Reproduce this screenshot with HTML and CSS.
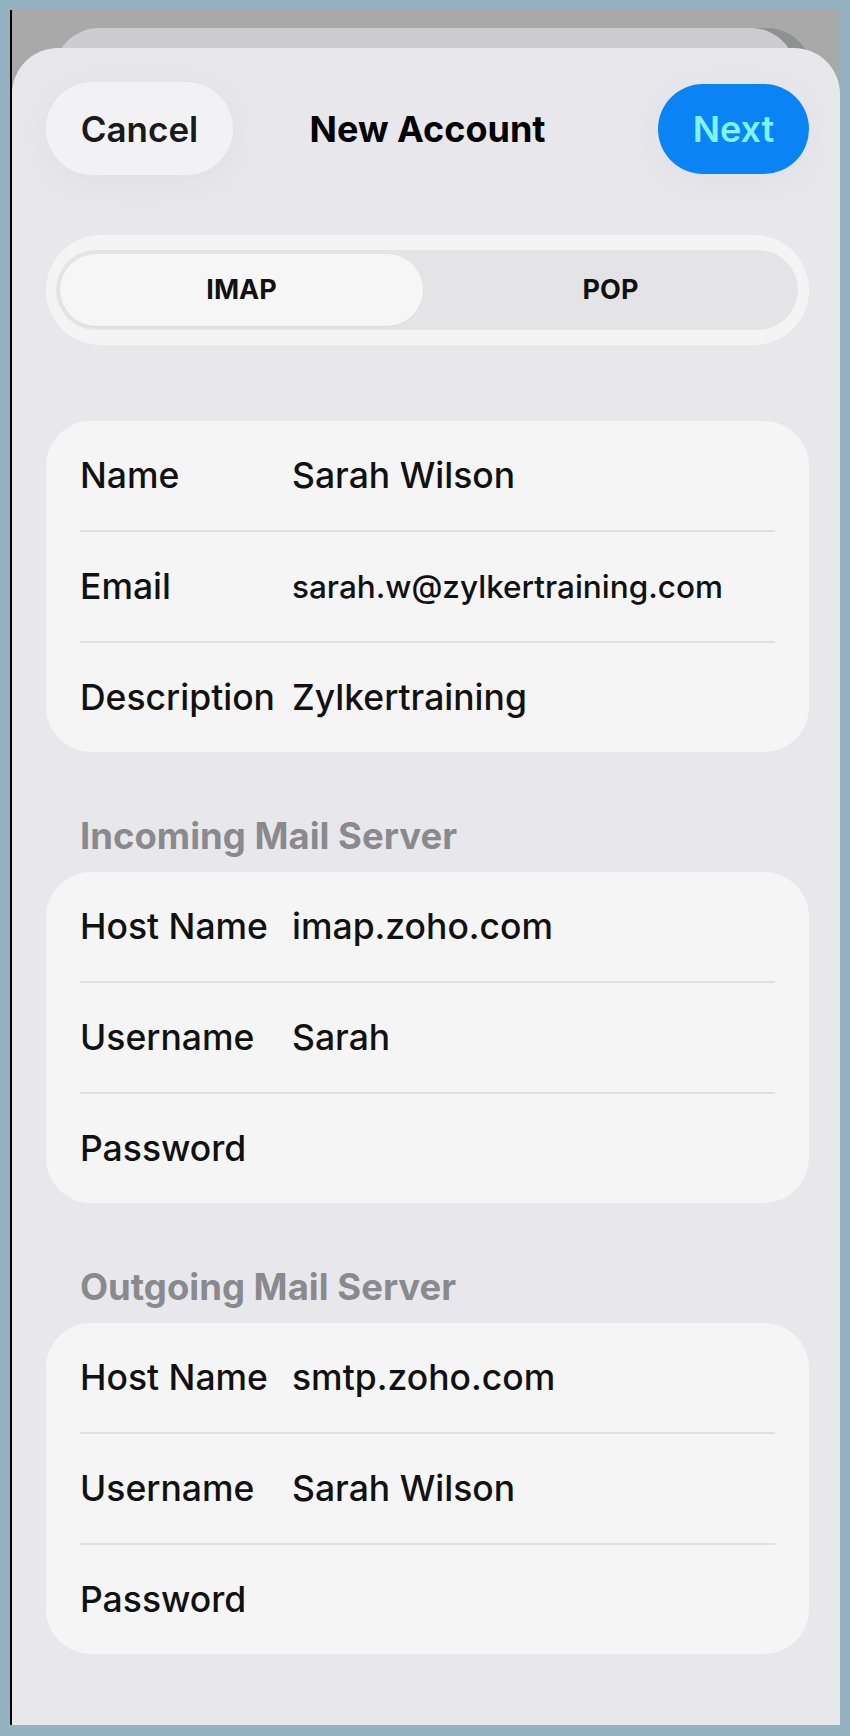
FILE: index.html
```html
<!DOCTYPE html>
<html lang="en">

<head>
    <meta charset="UTF-8">
    <meta name="viewport" content="width=device-width, initial-scale=1.0">
    <title>New Account</title>
    <link rel="stylesheet" href="styles.css">
</head>

<body>
    <div class="frame">
        <div class="screen">
            <div class="back-card"></div>

            <div class="sheet">
                <header class="nav">
                    <button class="pill-btn cancel">Cancel</button>
                    <h1 class="title">New Account</h1>
                    <button class="pill-btn next">Next</button>
                </header>

                <div class="segment">
                    <div class="segment-track">
                        <span class="seg-item active">IMAP</span>
                        <span class="seg-item">POP</span>
                    </div>
                </div>

                <div class="card first">
                    <div class="row"><span class="label">Name</span><span class="value">Sarah Wilson</span></div>
                    <div class="row"><span class="label">Email</span><span class="value small">sarah.w@zylkertraining.com</span></div>
                    <div class="row"><span class="label">Description</span><span class="value">Zylkertraining</span></div>
                </div>

                <h2 class="group-title">Incoming Mail Server</h2>
                <div class="card">
                    <div class="row"><span class="label">Host Name</span><span class="value">imap.zoho.com</span></div>
                    <div class="row"><span class="label">Username</span><span class="value">Sarah</span></div>
                    <div class="row"><span class="label">Password</span><span class="value"></span></div>
                </div>

                <h2 class="group-title">Outgoing Mail Server</h2>
                <div class="card">
                    <div class="row"><span class="label">Host Name</span><span class="value">smtp.zoho.com</span></div>
                    <div class="row"><span class="label">Username</span><span class="value">Sarah Wilson</span></div>
                    <div class="row"><span class="label">Password</span><span class="value"></span></div>
                </div>
            </div>
        </div>
    </div>
</body>

</html>
```

FILE: styles.css
```css
body {
    margin: 0;
    background-color: #95b2c2;
    font-family: 'Inter', 'Noto Sans', sans-serif;
    color: #111111;
}

.frame {
    padding: 10px 10px 11px 10px;
}

.screen {
    display: flex;
    flex-direction: column;
    height: 1715px;
    border-left: 2px solid #000000;
    background-color: #a9a9a9;
    overflow: hidden;
}

.back-card {
    height: 60px;
    margin: 18px 44px 0 42px;
    border-radius: 45px 45px 0 0;
    background-color: #cdcdd1;
    box-shadow: 16px 0 0 #8f9090;
}

.sheet {
    flex: 1;
    margin-top: -40px;
    padding: 34px 31px 0 34px;
    border-radius: 46px 46px 0 0;
    background-color: #e8e8ec;
}

/* top bar */
.nav {
    display: grid;
    grid-template-columns: 1fr auto 1fr;
    align-items: center;
    height: 93px;
}

.pill-btn {
    border: none;
    font-family: inherit;
    font-size: 35px;
    font-weight: 600;
    box-shadow: 0 6px 40px rgba(0, 0, 0, 0.04);
}

.cancel {
    justify-self: start;
    width: 187px;
    height: 93px;
    border-radius: 47px;
    background-color: #f2f2f4;
    color: #1a1a1a;
}

.next {
    justify-self: end;
    width: 151px;
    height: 90px;
    border-radius: 45px;
    background-color: #0a84f4;
    color: #7ff3f6;
    font-size: 36px;
}

.title {
    margin: 0;
    font-size: 36px;
    font-weight: 700;
    color: #000000;
}

/* IMAP / POP switch */
.segment {
    margin-top: 60px;
    padding: 15px 11px 15px 10px;
    border-radius: 55px;
    background-color: #f4f4f5;
}

.segment-track {
    display: grid;
    grid-template-columns: 1fr 1fr;
    padding: 4px;
    border-radius: 40px;
    background-color: #e4e4e6;
}

.seg-item {
    height: 72px;
    line-height: 72px;
    text-align: center;
    font-size: 27px;
    font-weight: 700;
    border-radius: 36px;
}

.seg-item.active {
    margin-right: 4px;
    background-color: #f6f6f6;
    box-shadow: 0 1px 2px rgba(0, 0, 0, 0.04);
}

/* form cards */
.card {
    border-radius: 45px;
    background-color: #f5f5f5;
}

.card.first {
    margin-top: 76px;
}

.row {
    display: flex;
    align-items: center;
    height: 109px;
    margin: 0 34px;
}

.row + .row {
    border-top: 2px solid #e0e0e2;
}

.label {
    flex-shrink: 0;
    width: 212px;
    font-size: 35.5px;
    font-weight: 500;
}

.value {
    font-size: 35.5px;
    font-weight: 500;
}

.value.small {
    font-size: 31.5px;
}

.group-title {
    margin: 64px 0 16px 0;
    padding-left: 34px;
    line-height: 40px;
    font-size: 36.5px;
    font-weight: 700;
    color: #8a8a8e;
}
```
